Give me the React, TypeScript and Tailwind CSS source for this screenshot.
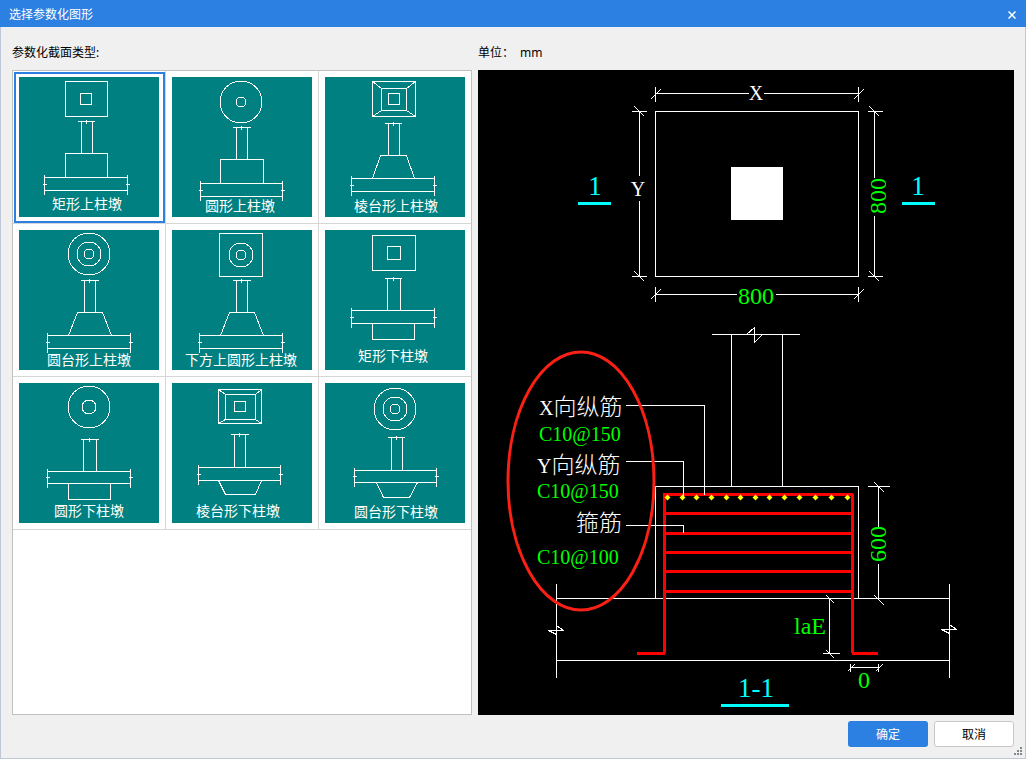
import { useState } from "react";

type Box = [x1: number, y1: number, x2: number, y2: number];
type Circle = [cx: number, cy: number, r: number];

interface Shape {
  name: string;
  boxes?: Box[];
  circles?: Circle[];
  // true when the two outer boxes are joined at their corners
  hipped?: boolean;
  // break line on top of the column: x1, x2, y
  cap: [number, number, number];
  // column: left, right
  column: [number, number];
  slab: Box;
  // outline of the pier, open towards the slab
  pier: string;
  label: [number, number];
}

const shapes: Shape[] = [
  {
    name: "矩形上柱墩",
    boxes: [[46, 4, 88, 39], [61, 16, 72, 27]],
    cap: [58, 75, 44],
    column: [62, 73],
    slab: [25, 100, 108, 113],
    pier: "M46 100V76H88V100",
    label: [68, 132],
  },
  {
    name: "圆形上柱墩",
    circles: [[69, 25, 21], [69, 25, 5]],
    cap: [60, 78, 50],
    column: [64, 75],
    slab: [28, 106, 110, 119],
    pier: "M48 106V82H91V106",
    label: [68, 134],
  },
  {
    name: "棱台形上柱墩",
    boxes: [[47, 4, 90, 39], [56, 11, 81, 33], [63, 16, 74, 27]],
    hipped: true,
    cap: [59, 76, 46],
    column: [63, 74],
    slab: [26, 101, 109, 114],
    pier: "M47 101L55 78H81L89 101",
    label: [71, 134],
  },
  {
    name: "圆台形上柱墩",
    circles: [[70, 24, 21], [70, 24, 12], [70, 24, 5]],
    cap: [61, 79, 50],
    column: [65, 76],
    slab: [28, 105, 111, 118],
    pier: "M49 105L58 82H83L92 105",
    label: [70, 135],
  },
  {
    name: "下方上圆形上柱墩",
    boxes: [[47, 3, 90, 46]],
    circles: [[69, 25, 12], [69, 25, 5]],
    cap: [60, 78, 50],
    column: [64, 75],
    slab: [27, 105, 110, 118],
    pier: "M48 105L57 82H82L91 105",
    label: [69, 135],
  },
  {
    name: "矩形下柱墩",
    boxes: [[47, 5, 90, 40], [62, 16, 75, 29]],
    cap: [59, 76, 48],
    column: [62, 75],
    slab: [26, 80, 109, 93],
    pier: "M47 93V109H89V93",
    label: [68, 131],
  },
  {
    name: "圆形下柱墩",
    circles: [[70, 24, 21], [70, 24, 7]],
    cap: [61, 79, 56],
    column: [64, 77],
    slab: [28, 88, 111, 100],
    pier: "M49 100V116H91V100",
    label: [70, 133],
  },
  {
    name: "棱台形下柱墩",
    boxes: [[46, 6, 89, 40], [53, 11, 83, 36], [62, 18, 73, 28]],
    hipped: true,
    cap: [58, 76, 51],
    column: [62, 73],
    slab: [26, 84, 108, 97],
    pier: "M46 97L53 111H83L89 97",
    label: [66, 133],
  },
  {
    name: "圆台形下柱墩",
    circles: [[70, 26, 21], [70, 26, 12], [70, 26, 5]],
    cap: [62, 79, 54],
    column: [66, 77],
    slab: [29, 87, 111, 99],
    pier: "M51 99L58 114H84L92 99",
    label: [71, 134],
  },
];

const barDots = [189, 204, 218, 233, 248, 262, 277, 291, 306, 321, 337, 353, 369];
const stirrups = [442, 462, 481, 500, 520];

function Thumbnail({ shape }: { shape: Shape }) {
  const { boxes = [], circles = [], cap, column, slab } = shape;
  const [sx1, sy1, sx2, sy2] = slab;
  // the column stands on the pier when the pier is above the slab
  const top = Number(shape.pier.match(/(?:V|L\d+ )(\d+)/)![1]);
  const foot = Math.min(top, sy1);
  const mid = Math.round((sy1 + sy2) / 2);
  const capMid = Math.round((cap[0] + cap[1]) / 2);

  return (
    <svg viewBox="0 0 140 140" className="block h-[140px] w-[140px] bg-[#008080]">
      <g fill="none" stroke="#fff" shapeRendering="crispEdges">
        {circles.map(([cx, cy, r]) => (
          <circle key={r} cx={cx} cy={cy} r={r} />
        ))}
      </g>
      <g
        fill="none"
        stroke="#fff"
        shapeRendering="crispEdges"
        transform="translate(0.5 0.5)"
      >
        {boxes.map(([x1, y1, x2, y2]) => (
          <rect key={x1} x={x1} y={y1} width={x2 - x1} height={y2 - y1} />
        ))}
        {shape.hipped && (
          <path
            d={`M${boxes[0][0]} ${boxes[0][1]}L${boxes[1][0]} ${boxes[1][1]}
              M${boxes[0][2]} ${boxes[0][1]}L${boxes[1][2]} ${boxes[1][1]}
              M${boxes[0][0]} ${boxes[0][3]}L${boxes[1][0]} ${boxes[1][3]}
              M${boxes[0][2]} ${boxes[0][3]}L${boxes[1][2]} ${boxes[1][3]}`}
          />
        )}
        <path d={`M${cap[0]} ${cap[2]}H${cap[1]}M${capMid} ${cap[2] - 2}V${cap[2] + 2}`} />
        <path d={`M${column[0]} ${cap[2]}V${foot}M${column[1]} ${cap[2]}V${foot}`} />
        <path d={shape.pier} />
        <path d={`M${sx1} ${sy1}H${sx2}M${sx1} ${sy2}H${sx2}`} />
        <path d={`M${sx1} ${sy1 - 3}V${sy2 + 4}M${sx2} ${sy1 - 3}V${sy2 + 4}`} />
        <path d={`M${sx1 - 2} ${mid}H${sx1 + 2}M${sx2 - 2} ${mid}H${sx2 + 2}`} />
      </g>
      <text
        x={shape.label[0]}
        y={shape.label[1]}
        textAnchor="middle"
        fill="#fff"
        className="font-['Noto_Sans_CJK_SC',sans-serif] text-[14px]"
      >
        {shape.name}
      </text>
    </svg>
  );
}

function Drawing() {
  return (
    <svg viewBox="0 0 536 645" className="block h-auto w-full font-['Liberation_Serif','Noto_Sans_CJK_SC',serif]">
      <rect x="253" y="97" width="52" height="53" fill="#fff" />

      <g fill="none" stroke="#fff" shapeRendering="crispEdges" transform="translate(0.5 0.5)">
        {/* Plan */}
        <rect x="177" y="41" width="203" height="165" />
        <path d="M177 23H270M285 23H380M177 16V31M380 16V31M172 29L182 19M375 29L385 19" />
        <path d="M177 224H258M297 224H380M177 216V231M380 216V231M172 229L182 219M375 229L385 219" />
        <path d="M161 41V105M161 130V206M153 41H168M153 206H168M156 36L166 46M156 201L166 211" />
        <path d="M396 41V107M396 145V206M389 41H404M389 206H404M391 36L401 46M391 201L401 211" />

        {/* Section */}
        <path d="M233 264H321M268 264L276 257V272L284 264" />
        <path d="M253 264V416M304 264V416" />
        <path d="M177 528V416H380V528" />
        <path d="M78 528H471M78 590H471M78 513V607M471 513V607" />
        <path d="M70 560H85L78 555M70 560L78 564M463 559H478L471 554M463 559L471 563" />
        <path d="M389 416H411M400 416V456M400 493V528M396 412L406 422M396 525L406 535" />
        <path d="M351 528V583M344 583H361M348 525L356 533M348 580L356 588" />
        <path d="M372 597H400M372 593V601M400 593V601M369 601L376 594M397 601L404 594" />
      </g>

      {/* Rebar */}
      <g fill="#f00" shapeRendering="crispEdges">
        <rect x="185" y="423" width="190" height="3" />
        {stirrups.map((y) => (
          <rect key={y} x="186" y={y} width="188" height="3" />
        ))}
        <rect x="185" y="424" width="3" height="159" />
        <rect x="373" y="424" width="3" height="159" />
        <rect x="159" y="582" width="28" height="3" />
        <rect x="374" y="582" width="26" height="3" />
      </g>
      {barDots.map((x) => (
        <path
          key={x}
          d={`M${x - 2} 427h1v-1h1v-1h1v1h1v1h1v1h-1v1h-1v1h-1v-1h-1v-1h-1z`}
          fill="#ff0"
          stroke="#ff0"
          strokeWidth="0.5"
        />
      ))}

      {/* Leaders */}
      <g fill="none" stroke="#fff" shapeRendering="crispEdges" transform="translate(0.5 0.5)">
        <path d="M147 335H226V424M147 391H205V426M147 455H205V462" />
      </g>
      <ellipse cx="103" cy="411" rx="73" ry="129" fill="none" stroke="#fb2015" strokeWidth="3" />

      <g fill="#0ff">
        <rect x="100" y="132" width="33" height="3" />
        <rect x="424" y="132" width="33" height="3" />
        <rect x="243" y="634" width="68" height="3" />
        <g className="text-[27px]" textAnchor="middle">
          <text x="117" y="125">1</text>
          <text x="440" y="125">1</text>
          <text x="278" y="627">1-1</text>
        </g>
      </g>

      <g fill="#fff" textAnchor="middle" className="text-[20px]">
        <text x="278" y="30">X</text>
        <text x="160" y="126">Y</text>
      </g>
      <g fill="#fff" className="text-[23px] font-light">
        <text x="61" y="345">
          <tspan className="text-[20px]">X</tspan>
          <tspan className="font-['Noto_Sans_CJK_SC',sans-serif]">向纵筋</tspan>
        </text>
        <text x="59" y="403">
          <tspan className="text-[20px]">Y</tspan>
          <tspan className="font-['Noto_Sans_CJK_SC',sans-serif]">向纵筋</tspan>
        </text>
        <text x="98" y="461" className="font-['Noto_Sans_CJK_SC',sans-serif]">箍筋</text>
      </g>

      <g fill="#0f0" className="text-[24px]">
        <text x="278" y="234" textAnchor="middle">800</text>
        <text transform="translate(408 126) rotate(-90)" textAnchor="middle">800</text>
        <text transform="translate(408 474) rotate(-90)" textAnchor="middle">600</text>
        <text x="316" y="564">laE</text>
        <text x="386" y="618" textAnchor="middle">0</text>
      </g>
      <g fill="#0f0" className="text-[20px]">
        <text x="61" y="371">C10@150</text>
        <text x="59" y="428">C10@150</text>
        <text x="59" y="494">C10@100</text>
      </g>
    </svg>
  );
}

export default function App() {
  const [selected, setSelected] = useState(0);

  return (
    <div className="flex min-h-screen flex-col bg-[#f0f0f0] font-['Noto_Sans','Noto_Sans_CJK_SC',sans-serif] text-xs text-black">
      <header className="flex h-[27px] items-center justify-between bg-[#2c80e2] pt-0.5 pr-2 pl-[9px] text-white">
        <h1>选择参数化图形</h1>
        <button type="button" aria-label="关闭" className="flex h-3 w-3 items-center justify-center">
          <svg viewBox="0 0 8 8" className="h-2 w-2" stroke="#fff" strokeWidth="1.5">
            <path d="M0.5 0.5L7.5 7.5M7.5 0.5L0.5 7.5" />
          </svg>
        </button>
      </header>

      <div className="relative flex flex-1 flex-col border-x border-b border-[#c0c8d8] px-[11px] pb-[11px]">
        <main className="flex flex-1 gap-1.5">
          <section className="flex w-[460px] shrink-0 flex-col">
            <h2 className="flex h-[43px] items-center pt-2">参数化截面类型:</h2>
            <div className="flex-1 border border-[#c0c0c0] bg-white">
              <div className="grid w-max grid-cols-[auto_auto_auto]">
                {shapes.map((shape, i) => (
                  <button
                    key={shape.name}
                    type="button"
                    aria-label={shape.name}
                    aria-pressed={i === selected}
                    onClick={() => setSelected(i)}
                    className="border-r border-b border-[#d6d6d6] pt-px pl-px nth-[3n]:border-r-0"
                  >
                    <span
                      className={
                        i === selected
                          ? "block border-2 border-[#2c80e2] pt-[3px] pr-1 pb-1 pl-[3px]"
                          : "block border-2 border-transparent pt-[3px] pr-1 pb-1 pl-[3px]"
                      }
                    >
                      <Thumbnail shape={shape} />
                    </span>
                  </button>
                ))}
              </div>
            </div>
          </section>

          <section className="flex min-w-0 flex-1 flex-col">
            <p className="flex h-[43px] items-center gap-1.5 pt-2">
              <span>单位：</span>
              <span>mm</span>
            </p>
            <div className="flex-1 bg-black">
              <Drawing />
            </div>
          </section>
        </main>

        <footer className="flex justify-end gap-1.5 pt-1.5">
          <button type="button" className="h-[26px] w-20 rounded-[3px] bg-[#2c80e2] pt-0.5 text-white">
            确定
          </button>
          <button type="button" className="h-[26px] w-20 rounded-[3px] border border-[#c8c8c8] bg-white pt-0.5">
            取消
          </button>
        </footer>

        {/* Resize grip */}
        <svg viewBox="0 0 8 8" className="absolute right-[3px] bottom-[3px] h-2 w-2" fill="#808890">
          <path d="M6 0h2v2h-2zM3 3h2v2h-2zM6 3h2v2h-2zM0 6h2v2h-2zM3 6h2v2h-2zM6 6h2v2h-2z" />
        </svg>
      </div>
    </div>
  );
}
